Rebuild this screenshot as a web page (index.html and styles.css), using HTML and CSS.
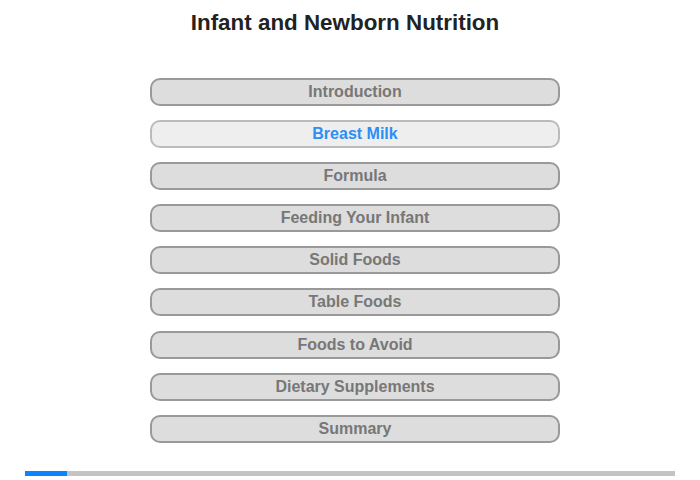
FILE: index.html
```html
<!DOCTYPE html>
<html>
<head>
<meta charset="utf-8">
<link rel="stylesheet" href="styles.css">
</head>
<body>
<div class="page">
  <h1 class="title">Infant and Newborn Nutrition</h1>
  <nav class="menu">
    <div class="item">Introduction</div>
    <div class="item active">Breast Milk</div>
    <div class="item">Formula</div>
    <div class="item">Feeding Your Infant</div>
    <div class="item">Solid Foods</div>
    <div class="item">Table Foods</div>
    <div class="item">Foods to Avoid</div>
    <div class="item">Dietary Supplements</div>
    <div class="item">Summary</div>
  </nav>
  <div class="progress"><div class="progress-fill" style="width:42px"></div></div>
</div>
</body>
</html>
```
FILE: styles.css
```css
html, body {
  margin: 0;
  padding: 0;
  background: #fff;
}
.page {
  width: 700px;
  height: 480px;
  font-family: "Liberation Sans", Arial, sans-serif;
  display: flex;
  flex-direction: column;
}
.title {
  margin: 0;
  padding: 10px 10px 0 0;
  font-size: 22.4px;
  line-height: 25px;
  font-weight: bold;
  color: #222;
  text-align: center;
}
.menu {
  margin: 43px 0 0 150px;
  width: 410px;
  display: flex;
  flex-direction: column;
  gap: 14.1px;
}
.item {
  box-sizing: border-box;
  height: 28px;
  border: 2px solid #999;
  border-radius: 10px;
  background: #ddd;
  color: #777;
  font-size: 16px;
  font-weight: bold;
  line-height: 23px;
  text-align: center;
}
.item.active {
  background: #eee;
  border-color: #bbb;
  color: #2b8ff5;
}
.progress {
  margin: 28px 0 0 25px;
  width: 650px;
  height: 5px;
  background: #c4c4c4;
}
.progress-fill {
  height: 100%;
  background: #0a84ff;
}
```
